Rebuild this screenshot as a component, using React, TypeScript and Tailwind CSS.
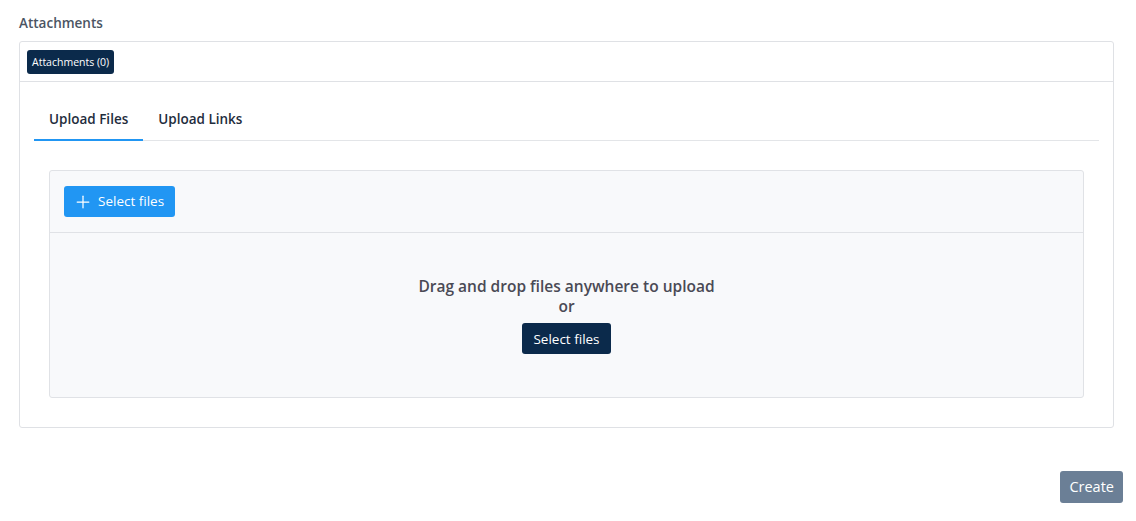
import { Plus } from 'lucide-react';

export default function App() {
  return (
    <div className="min-h-[521px] bg-white pt-[14px] font-['Open_Sans','Noto_Sans',sans-serif] text-[#495057]">
      <div className="ml-[19px] mr-[22px]">
        <h2 className="text-[13.5px] font-semibold leading-[18px] text-[#4b5563]">Attachments</h2>

        <div className="mt-[9px] rounded-[3px] border border-[#dfe1e5]">
          <div className="flex h-[40px] items-center border-b border-[#dfe1e5] px-[7px]">
            <span className="rounded-[3px] bg-[#0b2a4b] px-[5px] py-[4px] text-[10.5px] leading-[16px] text-white">
              Attachments (0)
            </span>
          </div>

          <div className="px-[14px] pb-[29px] pt-[16px]">
            <div className="flex border-b border-[#e3e5e8]">
              <button className="-mb-px border-b-2 border-[#2196f3] px-[15px] pb-[10px] pt-[11px] text-[13.5px] font-semibold leading-[20px] text-[#1f2d3d]">
                Upload Files
              </button>
              <button className="-mb-px border-b-2 border-transparent px-[15px] pb-[10px] pt-[11px] text-[13.5px] font-semibold leading-[20px] text-[#1f2d3d]">
                Upload Links
              </button>
            </div>

            <div className="mx-[15px] mt-[29px] rounded-[3px] border border-[#e0e2e6] bg-[#f8f9fb]">
              <div className="border-b border-[#e0e2e6] px-[14px] py-[15px]">
                <button className="flex h-[31px] items-center gap-[5px] rounded-[3px] bg-[#2196f3] pl-[9px] pr-[11px] text-[13.5px] text-white">
                  <Plus size={20} strokeWidth={1.5} />
                  Select files
                </button>
              </div>
              <div className="flex flex-col items-center pb-[43px] pt-[43px] text-[15.5px] font-semibold leading-[20px] text-[#4a4a55]">
                <p>Drag and drop files anywhere to upload</p>
                <p>or</p>
                <button className="mt-[7px] h-[31px] rounded-[3px] bg-[#0b2a4b] px-[11px] text-[13.5px] font-normal text-white">
                  Select files
                </button>
              </div>
            </div>
          </div>
        </div>
      </div>

      <div className="mr-[13px] mt-[43px] flex justify-end">
        <button className="h-[32px] rounded-[3px] bg-[#6b7f96] px-[9px] text-[14.5px] text-white">Create</button>
      </div>
    </div>
  );
}
